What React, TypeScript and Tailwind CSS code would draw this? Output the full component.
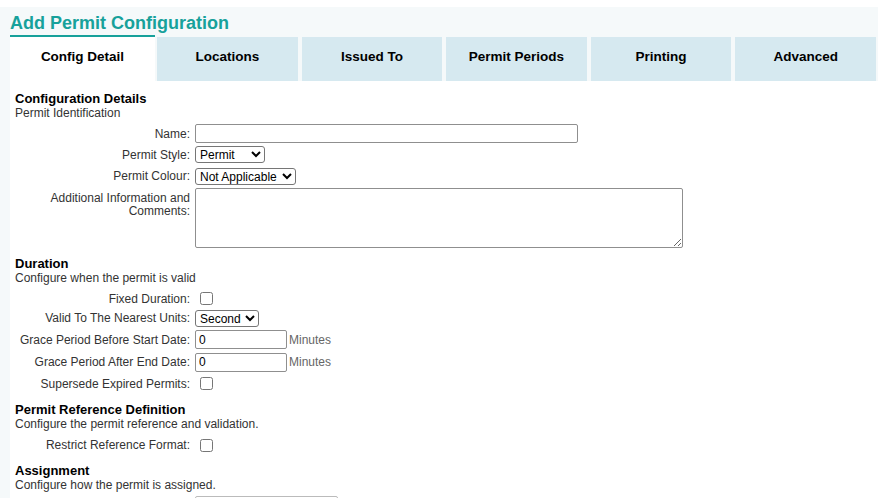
import type { ReactNode } from "react";

const tabs = ["Config Detail", "Locations", "Issued To", "Permit Periods", "Printing", "Advanced"];

function Section({ title, subtitle }: { title: string; subtitle: string }) {
  return (
    <div>
      <div className="text-[13px] font-bold leading-[15px] text-black">{title}</div>
      <div className="text-[12px] leading-[14px] text-[#333]">{subtitle}</div>
    </div>
  );
}

function Row({ label, children, h }: { label: ReactNode; children: ReactNode; h: string }) {
  return (
    <div className={`flex items-center ${h}`}>
      <div className="w-[180px] shrink-0 whitespace-nowrap pr-[5px] text-right text-[12px] leading-[14px] text-[#333]">
        {label}
      </div>
      <div className="flex items-center">{children}</div>
    </div>
  );
}

function Select({ value, w }: { value: string; w: string }) {
  return (
    <select
      defaultValue={value}
      className={`h-[17px] ${w} rounded-[3px] border border-[#767676] bg-white text-[12px] leading-[15px] text-black`}
    >
      <option>{value}</option>
    </select>
  );
}

function Check() {
  return <input type="checkbox" className="ml-[5px] h-[13px] w-[13px]" />;
}

function TextBox({ w, value }: { w: string; value?: string }) {
  return (
    <input
      defaultValue={value}
      className={`h-[19px] ${w} rounded-[2px] border border-[#8f8f8f] bg-white px-[3px] text-[12px] text-black outline-none`}
    />
  );
}

export default function App() {
  return (
    <div className="h-[498px] overflow-hidden bg-white font-['Liberation_Sans',Arial,sans-serif]">
      <div className="mt-[7px] h-[491px] bg-[#f5f9fa] pl-[10px]">
        <div className="h-[28px] pt-[5px] text-[18px] font-bold leading-[22px] text-[#17a19b]">
          Add Permit Configuration
        </div>
        <div className="flex h-[46px] items-end">
          {tabs.map((t, i) =>
            i === 0 ? (
              <div
                key={t}
                className="flex h-[46px] w-[145px] shrink-0 items-center justify-center border-t-2 border-[#17a19b] bg-white pb-[4px] text-[13.5px] font-bold text-black"
              >
                {t}
              </div>
            ) : (
              <div
                key={t}
                className="mx-[2px] flex h-[44px] flex-1 items-center justify-center bg-[#d6e9f0] pb-[4px] text-[13.5px] font-bold text-black"
              >
                {t}
              </div>
            )
          )}
        </div>
        <div className="h-full bg-white pl-[5px] pt-[10px]">
          <Section title="Configuration Details" subtitle="Permit Identification" />
          <div className="mt-[3px]">
            <Row label="Name:" h="h-[21px]">
              <TextBox w="w-[383px]" />
            </Row>
            <Row label="Permit Style:" h="h-[21px]">
              <Select value="Permit" w="w-[70px]" />
            </Row>
            <Row label="Permit Colour:" h="h-[22px]">
              <Select value="Not Applicable" w="w-[101px]" />
            </Row>
            <div className="flex h-[62px] items-start pt-[1px]">
              <div className="w-[180px] shrink-0 pr-[5px] pt-[4px] text-right text-[12px] leading-[13px] text-[#333]">
                Additional Information and Comments:
              </div>
              <textarea className="h-[60px] w-[488px] rounded-[2px] border border-[#8f8f8f] bg-white" />
            </div>
          </div>

          <div className="mt-[7px]">
            <Section title="Duration" subtitle="Configure when the permit is valid" />
          </div>
          <div className="mt-[4px]">
            <Row label="Fixed Duration:" h="h-[19px]">
              <Check />
            </Row>
            <Row label="Valid To The Nearest Units:" h="h-[20px]">
              <Select value="Second" w="w-[64px]" />
            </Row>
            <Row label="Grace Period Before Start Date:" h="h-[23px]">
              <TextBox w="w-[92px]" value="0" />
              <span className="ml-[2px] text-[12px] text-[#666]">Minutes</span>
            </Row>
            <Row label="Grace Period After End Date:" h="h-[22px]">
              <TextBox w="w-[92px]" value="0" />
              <span className="ml-[2px] text-[12px] text-[#666]">Minutes</span>
            </Row>
            <Row label="Supersede Expired Permits:" h="h-[21px]">
              <Check />
            </Row>
          </div>

          <div className="mt-[8px]">
            <Section title="Permit Reference Definition" subtitle="Configure the permit reference and validation." />
          </div>
          <div className="mt-[4px]">
            <Row label="Restrict Reference Format:" h="h-[20px]">
              <Check />
            </Row>
          </div>

          <div className="mt-[8px]">
            <Section title="Assignment" subtitle="Configure how the permit is assigned." />
          </div>
          <div className="mt-[3px]">
            <Row label="" h="h-[20px]">
              <div className="h-[19px] w-[143px] rounded-[2px] border border-[#bbb] bg-white" />
            </Row>
          </div>
        </div>
      </div>
    </div>
  );
}
